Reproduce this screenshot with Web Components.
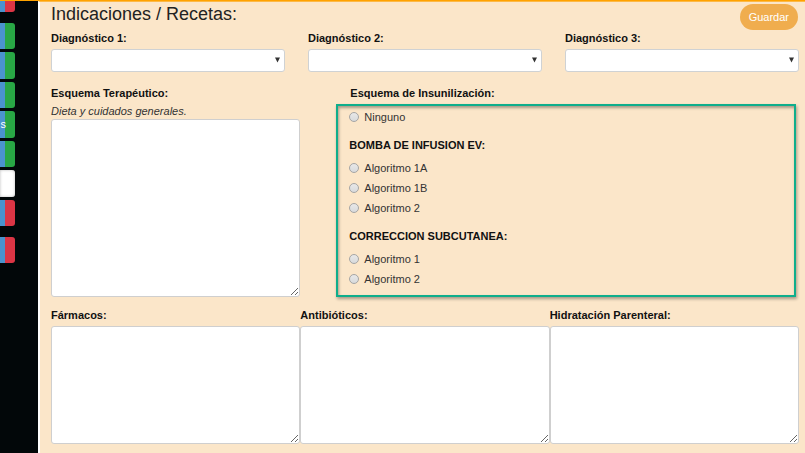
<!DOCTYPE html>
<html lang="es">
<head>
<meta charset="utf-8">
<title>Indicaciones / Recetas</title>
<style>
  body { margin: 0; background: #fbe6c9; font-family: "Liberation Sans", Arial, sans-serif; font-size: 11px; line-height: 16px; color: #111; }
</style>
</head>
<body>
<rx-app>
  <rx-sidebar slot="side">
    <rx-tab kind="red" class="first"></rx-tab>
    <rx-tab kind="green"></rx-tab>
    <rx-tab kind="green"></rx-tab>
    <rx-tab kind="green"></rx-tab>
    <rx-tab kind="green">s</rx-tab>
    <rx-tab kind="green"></rx-tab>
    <rx-tab kind="white"></rx-tab>
    <rx-tab kind="red"></rx-tab>
    <rx-tab kind="red" class="last"></rx-tab>
  </rx-sidebar>
  <rx-form></rx-form>
</rx-app>
<script>
const define = (name, html, setup) => customElements.define(name, class extends HTMLElement {
  constructor() {
    super();
    this.attachShadow({ mode: "open" }).innerHTML = html;
  }
  connectedCallback() { if (setup) setup(this, this.shadowRoot); }
});

define("rx-app", `
  <style>
    :host { display: grid; grid-template-columns: 38px 1fr; min-height: 100vh; box-sizing: border-box; border-top: 1px solid #ffa200; }
    main { border-left: 2px solid #fff; border-top: 1px solid #fdb945; background: #fbe6c9; padding: 0 6px 9px 11px; }
  </style>
  <slot name="side"></slot>
  <main><slot></slot></main>`);

define("rx-sidebar", `
  <style>
    :host { display: block; background: #020709; }
    nav { display: grid; grid-template-rows: 19px repeat(7, 1fr) 34px; row-gap: 3px; height: 262px; }
    ::slotted(.first) { margin-bottom: 8px; }
    ::slotted(.last) { margin-top: 8px; }
  </style>
  <nav><slot></slot></nav>`);

define("rx-tab", `
  <style>
    :host { display: grid; width: 15px; --edge: #28a745; }
    :host([kind="red"]) { --edge: #dc3545; }
    button { font: inherit; color: #fff; border: 0; padding: 0 9px 0 0; min-width: 0; border-radius: 0 3px 3px 0;
      display: flex; align-items: center; justify-content: flex-end;
      background: linear-gradient(90deg, #4b93ce 5px, var(--edge) 5px); }
    :host(.first) button { border-radius: 0 0 3px 0; }
    :host([kind="white"]) button { background: #fff; box-shadow: inset 0 0 3px #bbb; }
  </style>
  <button type="button"><slot></slot></button>`);

define("rx-select", `
  <style>
    :host { display: block; }
    label { display: block; font-weight: bold; margin-bottom: 3px; }
    .box { display: grid; position: relative; }
    select { appearance: none; height: 23px; width: 100%; border: 1px solid #cfd2d4; border-radius: 3px; background: #fff; font: inherit; padding: 0 16px 0 6px; }
    svg { position: absolute; right: 5px; top: 8px; width: 5px; height: 6px; pointer-events: none; }
  </style>
  <label for="s"></label>
  <div class="box"><select id="s"><option></option></select>
  <svg viewBox="0 0 5 6"><path d="M0 0.5H5L2.5 5.5Z" fill="#333"/></svg></div>`,
  (h, r) => { r.querySelector("label").textContent = h.getAttribute("label"); });

define("rx-area", `
  <style>
    :host { display: block; }
    label { display: block; font-weight: bold; margin-bottom: 3px; }
    em { display: block; color: #333; }
    :host([hint]) label { margin-bottom: 2px; }
    textarea { display: block; box-sizing: border-box; width: 100%; height: var(--area-height, 118px); border: 1px solid #cfcfcf; border-radius: 3px; background: #fff; font: inherit; resize: both; }
  </style>
  <label for="t"></label><em></em>
  <textarea id="t"></textarea>`,
  (h, r) => {
    r.querySelector("label").textContent = h.getAttribute("label");
    const em = r.querySelector("em");
    if (h.hasAttribute("hint")) em.textContent = h.getAttribute("hint"); else em.remove();
  });

define("rx-radios", `
  <style>
    :host { display: block; }
    h3 { margin: 0 0 5px; font-size: 11px; line-height: 16px; font-weight: bold; }
    label { display: flex; align-items: center; gap: 5px; height: 20px; color: #333; }
    input { appearance: none; box-sizing: border-box; width: 10px; height: 10px; margin: 0; border: 1px solid #a5a5a5; border-radius: 50%; background: linear-gradient(#e8e8e8, #d8dadc); }
    input:checked { background: radial-gradient(#444 2px, #e4e4e4 3px); }
  </style>
  <div id="list"></div>`,
  (h, r) => {
    const list = r.getElementById("list");
    const title = h.getAttribute("heading");
    if (title) list.append(Object.assign(document.createElement("h3"), { textContent: title }));
    for (const text of h.getAttribute("options").split("|")) {
      const label = document.createElement("label");
      label.append(Object.assign(document.createElement("input"), { type: "radio", name: "esquema" }), text);
      list.append(label);
    }
  });

define("rx-form", `
  <style>
    :host { display: block; }
    header { display: flex; justify-content: space-between; align-items: flex-start; height: 28px; }
    h1 { margin: 0; font-size: 18px; line-height: 24px; font-weight: normal; color: #222; }
    button { height: 26px; margin: 2px 1px 0 0; padding: 0 9px; border: 0; border-radius: 13px; background: #f0ad4e; color: #fff; font: inherit; }
    .three { display: grid; grid-template-columns: repeat(3, 1fr); }
    .selects { gap: 23px; }
    .scheme { display: grid; grid-template-columns: 1fr 2fr; margin: 13px 0 10px; }
    .scheme rx-area { --area-height: 178px; }
    .side { display: flex; flex-direction: column; padding: 0 3px 0 36px; }
    h2 { margin: 0 0 3px 14px; font-size: 11px; line-height: 16px; }
    .frame { flex: 1; display: flex; flex-direction: column; gap: 10px; box-sizing: border-box; border: 2px solid #0eae8b; padding: 1px 11px; box-shadow: 1px 2px 3px #0005, inset 1px 2px 3px #0005; }
  </style>
  <header><h1>Indicaciones / Recetas:</h1><button type="button">Guardar</button></header>
  <section class="three selects">
    <rx-select label="Diagnóstico 1:"></rx-select>
    <rx-select label="Diagnóstico 2:"></rx-select>
    <rx-select label="Diagnóstico 3:"></rx-select>
  </section>
  <section class="scheme">
    <rx-area label="Esquema Terapéutico:" hint="Dieta y cuidados generales."></rx-area>
    <div class="side">
      <h2>Esquema de Insunilización:</h2>
      <div class="frame">
        <rx-radios options="Ninguno"></rx-radios>
        <rx-radios heading="BOMBA DE INFUSION EV:" options="Algoritmo 1A|Algoritmo 1B|Algoritmo 2"></rx-radios>
        <rx-radios heading="CORRECCION SUBCUTANEA:" options="Algoritmo 1|Algoritmo 2"></rx-radios>
      </div>
    </div>
  </section>
  <section class="three">
    <rx-area label="Fármacos:"></rx-area>
    <rx-area label="Antibióticos:"></rx-area>
    <rx-area label="Hidratación Parenteral:"></rx-area>
  </section>`);
</script>
</body>
</html>
